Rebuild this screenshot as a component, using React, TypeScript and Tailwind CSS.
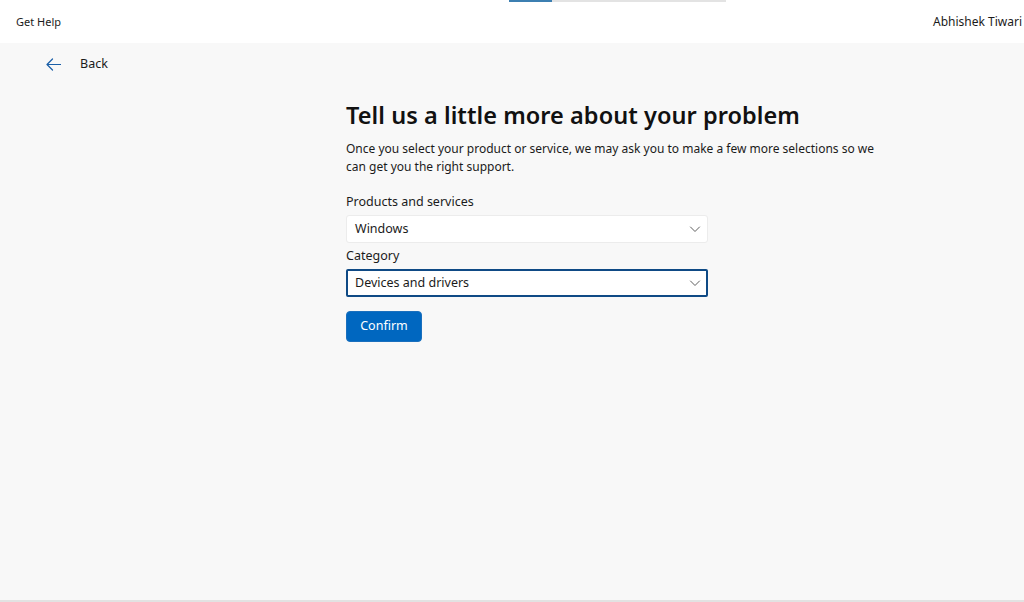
import React, { useState } from 'react';

const font = { fontFamily: '"Segoe UI", "Noto Sans", "Open Sans", sans-serif' };

const Chevron: React.FC = () => (
  <svg width="12" height="12" viewBox="0 0 12 12" fill="none" className="text-[#5f5f5f]">
    <path d="M1.5 4 L6 8.5 L10.5 4" stroke="currentColor" strokeWidth="1" strokeLinecap="round" strokeLinejoin="round" />
  </svg>
);

interface SelectBoxProps {
  label: string;
  value: string;
  focused?: boolean;
}

const SelectBox: React.FC<SelectBoxProps> = ({ label, value, focused }) => (
  <div className="flex flex-col">
    <span className="text-[12.5px] leading-[17px] text-[#1b1b1b] mb-[5px]">{label}</span>
    <div
      className={
        focused
          ? 'flex items-center justify-between h-[28px] w-[362px] pl-[7px] pr-[5px] bg-white border-2 border-[#0f4a85] rounded-[2px]'
          : 'flex items-center justify-between h-[28px] w-[362px] pl-[8px] pr-[6px] bg-white border border-[#ececec] rounded-[3px]'
      }
    >
      <span className="text-[12.5px] text-[#1b1b1b]">{value}</span>
      <Chevron />
    </div>
  </div>
);

const App: React.FC = () => {
  const [product] = useState('Windows');
  const [category] = useState('Devices and drivers');

  return (
    <div className="w-[1024px] h-[602px] flex flex-col bg-[#f8f8f8] overflow-hidden" style={font}>
      {/* Title bar */}
      <header className="relative h-[43px] shrink-0 bg-white flex items-center justify-between px-4">
        <span className="text-[11px] text-[#1b1b1b] mt-[1px]">Get Help</span>
        <span className="text-[12px] text-[#1b1b1b] -mr-[14px] mt-[1px]">Abhishek Tiwari</span>
        {/* progress strip */}
        <div className="absolute top-0 left-[509px] flex h-[2px]">
          <div className="w-[43px] bg-[#3c7fb1]" />
          <div className="w-[174px] bg-[#e3e3e3]" />
        </div>
      </header>

      <main className="flex-1 flex flex-col">
        {/* Back */}
        <div className="flex items-center h-[42px] pl-[46px] gap-[19px]">
          <svg width="15" height="13" viewBox="0 0 15 13" fill="none" className="text-[#1a5fa8]">
            <path d="M14.5 6.5 H1 M6.5 1 L1 6.5 L6.5 12" stroke="currentColor" strokeWidth="1.2" strokeLinecap="round" strokeLinejoin="round" />
          </svg>
          <span className="text-[12.5px] text-[#1b1b1b]">Back</span>
        </div>

        <div className="pl-[346px] pt-[14px] flex flex-col">
          <h1 className="text-[23.5px] leading-[32px] font-semibold text-[#111] tracking-[0.05px]">
            Tell us a little more about your problem
          </h1>
          <p className="mt-[9px] w-[532px] text-[12px] leading-[18px] text-[#1b1b1b]">
            Once you select your product or service, we may ask you to make a few more selections so we can get you the right support.
          </p>

          <div className="mt-[17px] flex flex-col gap-[4px]">
            <SelectBox label="Products and services" value={product} />
            <SelectBox label="Category" value={category} focused />
          </div>

          <button className="mt-[14px] w-[76px] h-[31px] rounded-[4px] bg-[#0067c0] border border-[#1a6fbd] text-white text-[12.5px]">
            Confirm
          </button>
        </div>
      </main>

      <div className="h-[2px] shrink-0 bg-[#e2e2e2]" />
    </div>
  );
};

export default App;
